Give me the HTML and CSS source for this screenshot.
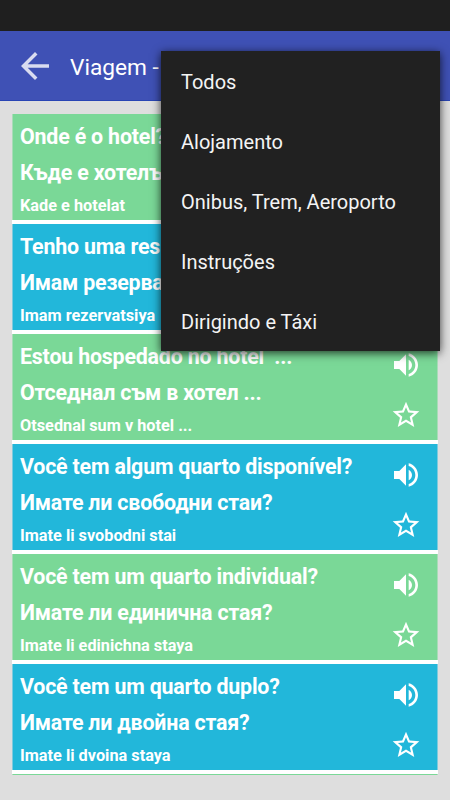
FILE: index.html
```html
<!DOCTYPE html>
<html lang="pt">
<head>
  <meta charset="UTF-8">
  <title>Viagem</title>
  <link rel="stylesheet" href="styles.css">
</head>
<body>
  <svg width="0" height="0" class="sprite">
    <symbol id="volume" viewBox="0 0 24 24">
      <path d="M3 9v6h4l5 5V4L7 9H3zm13.5 3c0-1.77-1.02-3.29-2.5-4.03v8.05c1.48-.73 2.5-2.25 2.5-4.02zM14 3.23v2.06c2.89.86 5 3.54 5 6.71s-2.11 5.85-5 6.71v2.06c4.01-.91 7-4.49 7-8.77s-2.99-7.86-7-8.77z"/>
    </symbol>
    <symbol id="star" viewBox="0 0 24 24">
      <path d="M22 9.24l-7.19-.62L12 2 9.19 8.63 2 9.24l5.46 4.73L5.82 21 12 17.27 18.18 21l-1.63-7.03L22 9.24zM12 15.4l-3.76 2.27 1-4.28-3.32-2.88 4.38-.38L12 6.1l1.71 4.04 4.38.38-3.32 2.88 1 4.28L12 15.4z"/>
    </symbol>
  </svg>

  <div class="status-bar"></div>
  <header class="toolbar">
    <svg class="back" viewBox="0 0 24 24"><path d="M20 11H7.83l5.59-5.59L12 4l-8 8 8 8 1.41-1.41L7.83 13H20v-2z"/></svg>
    <h1>Viagem -</h1>
  </header>

  <main class="phrases">
    <div class="card">
      <div class="text">
        <p>Onde é o hotel?</p>
        <p>Къде е хотелъ</p>
        <p class="small">Kade e hotelat</p>
      </div>
      <div class="icons">
        <svg><use href="#volume"/></svg>
        <svg><use href="#star"/></svg>
      </div>
    </div>
    <div class="card blue">
      <div class="text">
        <p>Tenho uma res</p>
        <p>Имам резерва</p>
        <p class="small">Imam rezervatsiya</p>
      </div>
      <div class="icons">
        <svg><use href="#volume"/></svg>
        <svg><use href="#star"/></svg>
      </div>
    </div>
    <div class="card">
      <div class="text">
        <p>Estou hospedado no hotel&nbsp; ...</p>
        <p>Отседнал съм в хотел ...</p>
        <p class="small">Otsednal sum v hotel ...</p>
      </div>
      <div class="icons">
        <svg><use href="#volume"/></svg>
        <svg><use href="#star"/></svg>
      </div>
    </div>
    <div class="card blue">
      <div class="text">
        <p>Você tem algum quarto disponível?</p>
        <p>Имате ли свободни стаи?</p>
        <p class="small">Imate li svobodni stai</p>
      </div>
      <div class="icons">
        <svg><use href="#volume"/></svg>
        <svg><use href="#star"/></svg>
      </div>
    </div>
    <div class="card">
      <div class="text">
        <p>Você tem um quarto individual?</p>
        <p>Имате ли единична стая?</p>
        <p class="small">Imate li edinichna staya</p>
      </div>
      <div class="icons">
        <svg><use href="#volume"/></svg>
        <svg><use href="#star"/></svg>
      </div>
    </div>
    <div class="card blue">
      <div class="text">
        <p>Você tem um quarto duplo?</p>
        <p>Имате ли двойна стая?</p>
        <p class="small">Imate li dvoina staya</p>
      </div>
      <div class="icons">
        <svg><use href="#volume"/></svg>
        <svg><use href="#star"/></svg>
      </div>
    </div>
    <div class="card"></div>
  </main>

  <ul class="menu">
    <li>Todos</li>
    <li>Alojamento</li>
    <li>Onibus, Trem, Aeroporto</li>
    <li>Instruções</li>
    <li>Dirigindo e Táxi</li>
  </ul>
</body>
</html>
```

FILE: styles.css
```css
* {
  box-sizing: border-box;
}

body {
  font-family: Roboto, "Noto Sans", sans-serif;
  background-color: #dedede;
  margin: 0;
  height: 800px;
  position: relative;
  overflow: hidden;
}

.sprite {
  display: none;
}

.status-bar {
  height: 31px;
  background-color: #1f1f1f;
}

.toolbar {
  display: flex;
  align-items: center;
  height: 70px;
  padding-left: 14px;
  background-color: #3f51b5;
  border-bottom: 1px solid #2945b4;
}

.back {
  width: 42px;
  height: 42px;
  fill: #d9dcf0;
}

.toolbar h1 {
  margin: 4px 0 0 14px;
  font-size: 22.7px;
  font-weight: 400;
  color: #fff;
}

.phrases {
  display: flex;
  flex-direction: column;
  gap: 4px;
  width: 426px;
  height: 661px;
  margin: 13px 0 0 12px;
  overflow: hidden;
  background-color: #fff;
}

.card {
  display: flex;
  flex: none;
  justify-content: space-between;
  height: 106px;
  padding: 5px 15px 0 7px;
  background-color: #7ad897;
  border: solid #a9dbb8;
  border-width: 0 1px;
  color: #fff;
}

.card.blue {
  background-color: #22b7da;
  border-color: #7fcadc;
}

.card p {
  margin: 0;
  font-size: 21.4px;
  font-weight: 700;
  line-height: 36px;
  letter-spacing: -0.2px;
  white-space: nowrap;
}

.card .small {
  font-size: 16.3px;
  line-height: 29px;
  letter-spacing: 0;
}

.icons {
  display: flex;
  flex-direction: column;
  gap: 18px;
  padding-top: 10px;
}

.icons svg {
  width: 32px;
  height: 32px;
  fill: #fff;
}

/* dropdown over the list */
.menu {
  position: absolute;
  top: 51px;
  left: 161px;
  width: 279px;
  height: 300px;
  margin: 0;
  padding: 0;
  list-style: none;
  background-color: #212121;
  box-shadow: 0 2px 9px rgba(0, 0, 0, 0.75);
}

.menu li {
  height: 60px;
  padding-left: 20px;
  font-size: 20px;
  line-height: 62px;
  color: #f4f4f4;
}
```
